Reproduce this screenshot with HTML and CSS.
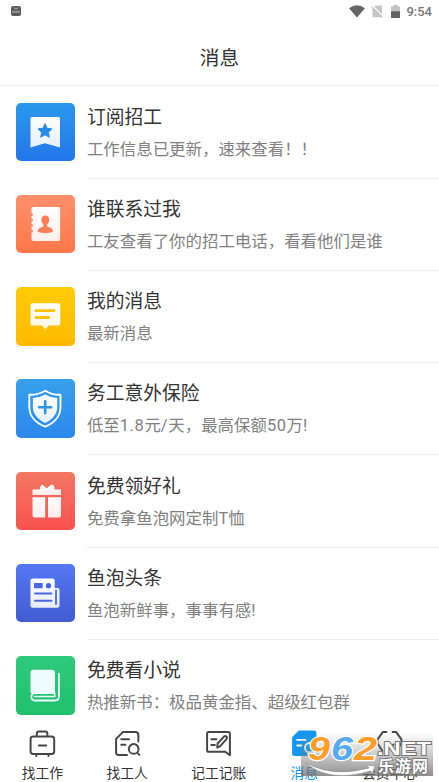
FILE: index.html
```
<!DOCTYPE html>
<html lang="zh-CN">
<head>
<meta charset="utf-8">
<title>消息</title>
<link rel="stylesheet" href="styles.css">
</head>
<body>
<svg width="0" height="0" class="defs">
  <defs>
    <linearGradient id="paper" x1="0" y1="0" x2="0" y2="1"><stop offset="0" stop-color="#fff"/><stop offset="1" stop-color="#fff" stop-opacity=".88"/></linearGradient>
  </defs>
</svg>
<div class="screen">
  <div class="status">
    <svg class="app-dot" width="10" height="10" viewBox="0 0 10 10"><rect width="10" height="10" rx="2" fill="#5c5c5c"/><path d="M3 1.8 5 3.3 7 1.8" fill="none" stroke="#bbb" stroke-width=".8"/><path d="M1 5.8h8" stroke="#c4c4c4" stroke-width="1.2" stroke-dasharray="1.5 .4"/></svg>
    <div class="status-right">
      <svg width="16" height="13" viewBox="0 0 16 13"><path d="M0 3.2Q8-2.8 16 3.2L8 12.6Z" fill="#666"/></svg>
      <svg class="sim" width="13" height="13" viewBox="0 0 13 13"><path d="M4.500.500H11v11.800H1.500V3.500Z" fill="#c6c6c6"/><path d="M1 .3 12.500 11.800" stroke="#fff" stroke-width="1.500"/><path d="M.6 1.300 11.800 12.700" stroke="#b4b4b4" stroke-width="1"/></svg>
      <svg class="battery" width="9" height="13" viewBox="0 0 9 13"><path d="M0 1.500h2.500V0h4v1.500H9v6H0Z" fill="#c3c3c3"/><path d="M0 6.300h9V13H0Z" fill="#646464"/></svg>
      <span class="clock">9:54</span>
    </div>
  </div>
  <header class="header">消息</header>
  <main class="list">
    <div class="row">
      <svg class="tile tile-blue" viewBox="0 0 58.5 58.5"><path d="M16.3 14H42.300q1.700 0 1.700 1.700V44.500L29 40.300 14.500 44.500V15.700Q14.500 14 16.300 14Z" fill="url(#paper)"/><path d="m29 20.700 2.100 4.600 4.900.6-3.600 3.400.9 4.900L29 31.800l-4.300 2.400.9-4.900-3.600-3.400 4.900-.6Z" fill="#278ae9" stroke="#278ae9" stroke-width="1" stroke-linejoin="round"/></svg>
      <div class="body"><div class="title">订阅招工</div><div class="sub">工作信息已更新，速来查看！！</div></div>
    </div>
    <div class="row">
      <svg class="tile tile-orange" viewBox="0 0 58.5 58.5"><rect x="15.500" y="12" width="28.700" height="34" rx="2" fill="url(#paper)"/><g fill="#ff865e"><circle cx="15.500" cy="19.500" r="1.500"/><circle cx="15.500" cy="25" r="1.500"/><circle cx="15.500" cy="30.500" r="1.500"/><circle cx="15.500" cy="36" r="1.500"/></g><path d="M29.300 20.400c5 0 4.800 6.500 1.900 9v2.100l4.800 1.900q.8.500.8 3.600Q29.300 39.300 22 37q0-3 .8-3.600l4.700-1.900v-2.100c-2.900-2.500-3.200-9 1.800-9Z" fill="#ff7e56"/></svg>
      <div class="body"><div class="title">谁联系过我</div><div class="sub">工友查看了你的招工电话，看看他们是谁</div></div>
    </div>
    <div class="row">
      <svg class="tile tile-yellow" viewBox="0 0 58.5 58.5"><path d="M16.500 16.300H42.300q2 0 2 2V36.500q0 2-2 2H33L29.300 42 25.500 38.500H16.500q-2 0-2-2V18.300q0-2 2-2Z" fill="url(#paper)"/><path d="M20 23.700H38M20 30.500H32.700" stroke="#ffc107" stroke-width="2.800" stroke-linecap="round"/></svg>
      <div class="body"><div class="title">我的消息</div><div class="sub">最新消息</div></div>
    </div>
    <div class="row">
      <svg class="tile tile-sky" viewBox="0 0 58.5 58.5"><path d="M29.200 11.700q7 4.400 15.300 4V28c0 9.500-7 16.300-15.300 19.700C20.500 44.300 13.300 37.500 13.300 28V15.700q8.500.4 15.900-4Z" fill="none" stroke="#fff" stroke-width="1.900" stroke-linejoin="round"/><path d="M29.200 15.500q6 3.500 12 3.400V28c0 7.500-5.500 13-12 16-6.500-3-12.300-8.500-12.300-16v-9.100q6.300.1 12.300-3.400Z" fill="url(#paper)"/><path d="M29.200 22.200v12M23.200 28.200h12" stroke="#2d92e8" stroke-width="2.600" stroke-linecap="round"/></svg>
      <div class="body"><div class="title">务工意外保险</div><div class="sub">低至<span class="num">1.8</span>元<span class="num">/</span>天，最高保额<span class="num">50</span>万!</div></div>
    </div>
    <div class="row">
      <svg class="tile tile-red" viewBox="0 0 58.5 58.5"><g fill="url(#paper)"><path d="M17 17.500h6.700q1-5.500 3.300-4.500l3.700 3.400L34.500 13q3-1.500 3.800 2l.2 2.500H45V23H16.500v-5Z"/><path d="M16.500 25.300H29.200V45.500H18.500q-2 0-2-2ZM32 25.300H45V43.500q0 2-2 2H32Z"/></g></svg>
      <div class="body"><div class="title">免费领好礼</div><div class="sub">免费拿鱼泡网定制T恤</div></div>
    </div>
    <div class="row">
      <svg class="tile tile-indigo" viewBox="0 0 58.5 58.5"><path d="M16.500 14.500H36.700q2 0 2 2V24H41.500q2 0 2 2V41.500q0 2.300-2.300 2.300H16.500q-2 0-2-2V16.500q0-2 2-2Z" fill="url(#paper)"/><rect x="18" y="19" width="8.700" height="5.300" rx=".7" fill="#4869e2"/><circle cx="32.500" cy="21.700" r="2.700" fill="#4869e2"/><path d="M19 29.500H35.500M19 36.800H35.500" stroke="#4869e2" stroke-width="2" stroke-linecap="round"/><path d="M40 26.500V40" stroke="#4869e2" stroke-width="1.800" stroke-linecap="round"/></svg>
      <div class="body"><div class="title">鱼泡头条</div><div class="sub">鱼泡新鲜事，事事有感!</div></div>
    </div>
    <div class="row">
      <svg class="tile tile-green" viewBox="0 0 58.5 58.5"><path d="M17.500 13.700H36q3 0 3 3V37H14.500V16.700q0-3 3-3Z" fill="#f0fbff"/><path d="M42.900 17.700V40.500q0 4-4 4H19.500q-4.200 0-4.200-3.700 0-3.800 4.200-3.800H38.500" fill="none" stroke="#f0fbff" stroke-width="1.800" stroke-linecap="round"/><path d="M18.500 40.500H38.700V37" fill="none" stroke="#f0fbff" stroke-width="1.500" stroke-linecap="round"/></svg>
      <div class="body"><div class="title">免费看小说</div><div class="sub">热推新书：极品黄金指、超级红包群</div></div>
    </div>
  </main>
  <nav class="tabs">
    <div class="tab"><svg class="tab-icon" viewBox="0 0 28 28"><path d="M8.500 7V4.500q0-2 2-2h6.200q2 0 2 2V7M5 7.200H22.800q2.500 0 2.500 2.500V21.500q0 2.700-2.500 2.700H5q-2.500 0-2.500-2.700V9.700Q2.500 7.200 5 7.200ZM8 24.500v1.500M19.800 24.500v1.500M10.500 16H17.500"/></svg>找工作</div>
    <div class="tab"><svg class="tab-icon" viewBox="0 0 28 28"><path d="M13.500 25H5q-2 0-2-2V9.500L9.500 3H21.500q3 0 3 3v6M8 10h7.500M8 15.300h4M20 14.500a4.700 4.700 0 1 1 0 9.400 4.700 4.700 0 1 1 0-9.400M23.500 23l2 2"/></svg>找工人</div>
    <div class="tab"><svg class="tab-icon" viewBox="0 0 28 28"><path d="M4.500 3H23.500Q25 3 25 4.500V25.300L20.500 22H4.500Q3 22 3 20.500V4.500Q3 3 4.500 3ZM7 10h5M7 15.500h3.500M12.800 18l.3-4 6.200-6.700q1-1 2.200 0t.2 2.400L15.700 16.500Z"/></svg>记工记账</div>
    <div class="tab active"><svg class="tab-icon" viewBox="0 0 28 28"><path class="solid" d="M8.500 1.500H23q2.500 0 2.500 2.500V23.500q0 2.500-2.500 2.500H4.500Q2 26 2 23.500V8Z"/><path class="cut" d="M7 10.500h8M7 16h4M19 13.500a4.500 4.500 0 1 1 0 9 4.500 4.500 0 1 1 0-9M22.500 22l3 3"/></svg>消息</div>
    <div class="tab"><svg class="tab-icon" viewBox="0 0 28 28"><path d="M11 3H7.500L2.500 10v4L7 21M17 3h3.500L25.500 10v4L21 21M10 15l4 4 4-4"/></svg>会员中心</div>
  </nav>
  <div class="watermark">
    <svg width="132" height="46" viewBox="0 0 132 46">
      <defs>
        <linearGradient id="shade" x1="0" y1="0" x2="0" y2="1"><stop offset="0" stop-color="#888" stop-opacity="0"/><stop offset="1" stop-color="#686868" stop-opacity=".75"/></linearGradient>
      </defs>
      <rect y="0" width="132" height="44" fill="url(#shade)"/>
      <path d="M5 31Q32 46 68 36L66 33.500 74 34 71 42 69.500 39Q28 51 5 31Z" fill="#fff" stroke="#888" stroke-width=".5"/>
      <g class="wm-num"><text x="7" y="28" textLength="22" lengthAdjust="spacingAndGlyphs" fill="#ff9e2c">9</text><text x="30" y="28" textLength="22" lengthAdjust="spacingAndGlyphs" fill="#58aaf0">6</text><text x="53" y="28" textLength="23" lengthAdjust="spacingAndGlyphs" fill="#ff9e2c">2</text></g>
      <text class="wm-net" x="76" y="22.500" textLength="54" lengthAdjust="spacingAndGlyphs">.NET</text>
      <text class="wm-cn" x="77" y="40" textLength="50" lengthAdjust="spacing">乐游网</text>
    </svg>
  </div>
</div>
</body>
</html>
```

FILE: styles.css
```
* { box-sizing: border-box; }
body {
  margin: 0;
  background: #fff;
  font-family: Roboto, "Noto Sans CJK SC", sans-serif;
  color: #333;
}
.defs { position: absolute; }
.screen {
  position: relative;
  display: flex;
  flex-direction: column;
  width: 439px;
  height: 782px;
  overflow: hidden;
  background: #fff;
}
.status {
  flex: none;
  display: flex;
  justify-content: space-between;
  align-items: center;
  height: 22px;
  padding: 0 7px 0 11px;
}
.status svg { display: block; }
.status-right { display: flex; align-items: center; }
.sim { margin-left: 6px; }
.battery { margin-left: 7px; }
.clock {
  margin-left: 6px;
  padding-top: 1px;
  font-size: 13px;
  font-weight: 500;
  line-height: 21px;
  color: #777;
}
.header {
  flex: none;
  height: 64px;
  border-bottom: 1px solid #f0f0f0;
  font-size: 19.7px;
  line-height: 73px;
  text-align: center;
}
.list {
  flex: 1;
  min-height: 0;
  overflow: hidden;
  padding-top: .4px;
}
.row {
  display: flex;
  height: 92.25px;
  padding-left: 16.4px;
}
.tile {
  flex: none;
  width: 58.5px;
  height: 58.5px;
  margin-top: 16.2px;
  border-radius: 5px;
}
.tile-blue { background: linear-gradient(#2b98ec, #2477e9); }
.tile-orange { background: linear-gradient(#ff8f6c, #ff7749); }
.tile-yellow { background: linear-gradient(#ffcb06, #ffb900); }
.tile-sky { background: linear-gradient(#37a0ec, #2c88ec); }
.tile-red { background: linear-gradient(#f27763, #fa514f); }
.tile-indigo { background: linear-gradient(#5477f5, #405dd2); }
.tile-green { background: linear-gradient(#2dca7b, #20c06c); }
.body {
  flex: 1;
  margin-left: 12px;
  padding-top: 15.3px;
  border-bottom: 1px solid #eee;
  white-space: nowrap;
}
.title {
  font-size: 18.8px;
  line-height: 32px;
}
.sub {
  font-size: 16.45px;
  line-height: 32px;
  color: #808080;
}
.num { letter-spacing: .6px; }
.tabs {
  flex: none;
  display: flex;
  justify-content: space-around;
  height: 58px;
  background: #fff;
}
.tab {
  display: flex;
  flex-direction: column;
  align-items: center;
  padding-top: 4.5px;
  font-size: 13.8px;
  line-height: 20px;
}
.tab-icon {
  display: block;
  flex: none;
  width: 29px;
  height: 29px;
  margin-bottom: 5px;
  fill: none;
  stroke: #444;
  stroke-width: 1.9;
  stroke-linecap: round;
  stroke-linejoin: round;
}
.tab.active { color: #1298f2; }
.tab-icon .solid { fill: #1298f2; stroke: none; }
.tab-icon .cut { stroke: #fff; }
.watermark {
  position: absolute;
  left: 301px;
  top: 732px;
}
.watermark svg { display: block; overflow: visible; }
.wm-num {
  font: italic bold 34px "Liberation Sans", sans-serif;
  stroke: #fff;
  stroke-width: 2.4px;
  paint-order: stroke;
}
.wm-net, .wm-cn {
  fill: #fff;
  stroke: #777;
  stroke-width: 1.8px;
  paint-order: stroke;
}
.wm-net { font: bold 19px "Liberation Sans", sans-serif; }
.wm-cn { font: bold 16px "Noto Sans CJK SC", sans-serif; }
```
